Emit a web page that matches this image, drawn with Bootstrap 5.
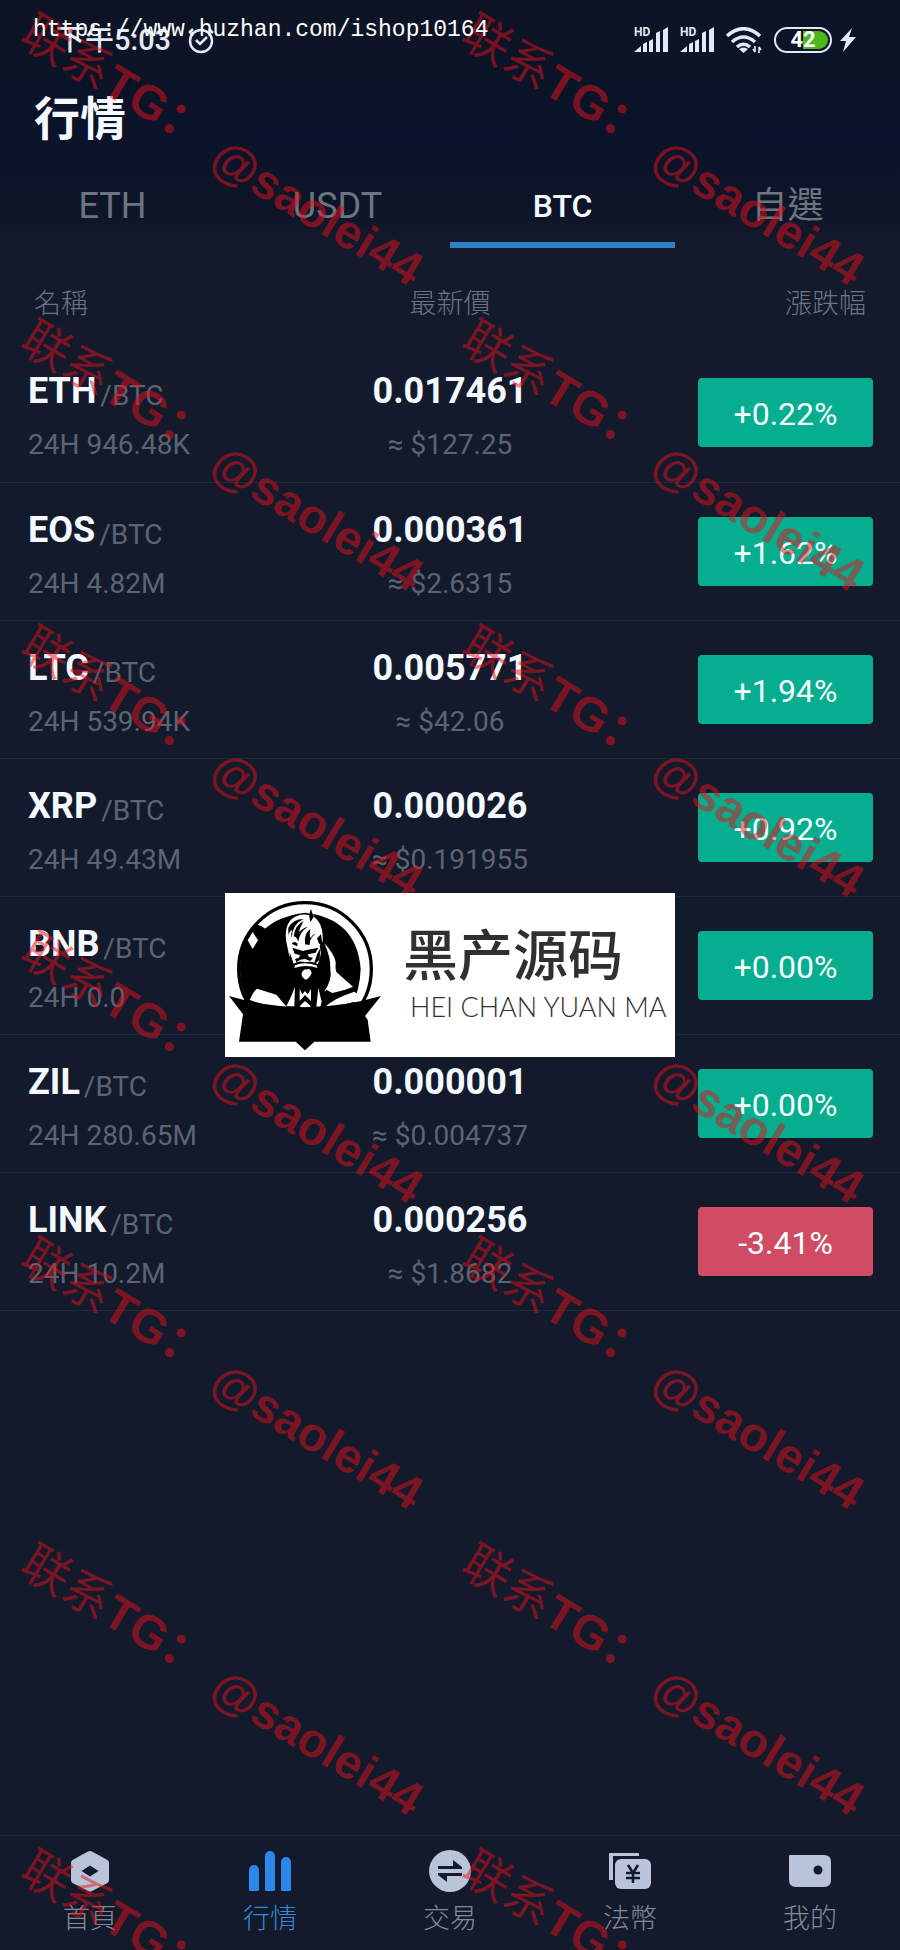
<!DOCTYPE html>
<html lang="zh-Hant">
<head>
<meta charset="utf-8">
<meta name="viewport" content="width=device-width, initial-scale=1">
<title>行情</title>
<link href="https://cdn.jsdelivr.net/npm/bootstrap@5.3.0/dist/css/bootstrap.min.css" rel="stylesheet">
<style>
  body { background: #121a2c; color: #f4f8ff; font-family: Roboto, "Noto Sans CJK TC", sans-serif; }
  .top-area { background: linear-gradient(#0c1424, #0b132a 55%, #0e1528 85%, #121a2c); }
  .status-bar { height: 88px; padding: 0 44px 8px 56px; color: #e3e9f8; }
  .status-icons { gap: 12px; }
  .clock-text { font-size: 29px; line-height: 36px; font-weight: 500; }
  .battery { width: 58px; height: 26px; border: 2px solid #e3e9f8; border-radius: 13px; padding: 2px;
    background: linear-gradient(90deg, transparent 50%, #4ab81c 50%); background-clip: content-box; color: #fff;
    font-size: 22px; line-height: 18px; font-weight: 700; text-align: center; }
  .page-title { font-size: 46px; line-height: 62px; font-weight: 700; padding-left: 34px; }
  .market-tabs a { height: 98px; padding-top: 20px; color: #6e7480; font-size: 36px; border-bottom: 6px solid transparent; text-decoration: none; }
  .market-tabs a.active { color: #f4f8ff; font-size: 32px; font-weight: 500; border-bottom-color: #3080c8; }
  .quotes { table-layout: fixed; --bs-table-bg: transparent; --bs-table-color: inherit; color: inherit; }
  .quotes th { height: 96px; padding: 17px 34px 0; font-size: 27px; font-weight: 300; color: #6c7482; border: 0; vertical-align: middle; }
  .quotes td { height: 138px; padding: 20px 27px 0; border-bottom: 1px solid #20293a; vertical-align: top; }
  .quotes td:nth-child(2) { padding: 20px 0 0; }
  .pair { height: 54px; padding-bottom: 6px; font-size: 36px; line-height: 42px; font-weight: 700; }
  .pair, .quotes td:first-child .sub-line { margin-left: 1px; }
  .pair .quote-unit { font-size: 28px; line-height: 32px; font-weight: 400; color: #5c6474; margin-left: 4px; }
  .price { font-size: 36px; line-height: 54px; font-weight: 700; }
  .sub-line { font-size: 28px; line-height: 54px; color: #5c6474; }
  .change { width: 175px; height: 69px; margin-top: 14px; padding: 3px 0 0; border: 0; border-radius: 4px; background: #06ad8f; color: #f4fffd; font-size: 32px; line-height: 66px; }
  .change.down { background: #d14b65; }
  .tab-bar { border-top: 1px solid #1a2335; height: 115px; padding-top: 14px; }
  .tab-bar a { color: #848b96; font-size: 27px; font-weight: 300; line-height: 36px; text-decoration: none; gap: 9px; }
  .tab-bar a.active { color: #3a88d4; }
  .tab-bar svg { color: #b9c4d8; }
  .tab-bar a.active svg { color: #2b87ea; }
  .marks { position: absolute; inset: 0; overflow: hidden; pointer-events: none; display: grid;
    grid-template-columns: 49% 49%; grid-auto-rows: 306px; }
  .stamp { display: flex; align-items: flex-start; gap: 16px; height: 68px; padding-left: 48px; margin-top: -22px;
    white-space: nowrap; transform-origin: 0 0; transform: rotate(31deg);
    font: 700 48px/60px "Liberation Sans", "Noto Sans CJK SC", sans-serif; color: rgba(230, 15, 25, .5); }
  .stamp i { font-style: normal; font-weight: 400; }
  .stamp b { align-self: flex-end; }
  .site-url { position: absolute; left: 33px; top: 15px; font: 23px/30px "Liberation Mono", monospace; color: #fff; text-decoration: none; }
  .brand-plate { position: absolute; left: 50%; top: 50%; width: 50%; height: 164px; transform: translate(-50%, -50%); background: #fff; }
  .brand-text { padding-left: 18px; color: #303030; font-family: "Noto Sans CJK SC", sans-serif; }
  .brand-name { font-size: 55px; line-height: 52px; font-weight: 500; margin-bottom: 12px; }
  .brand-latin { font: 300 27px/36px Lato, sans-serif; padding-left: 7px; white-space: nowrap; }
</style>
</head>
<body>
<div class="position-relative min-vh-100 d-flex flex-column overflow-hidden">
  <header class="top-area">
    <div class="status-bar d-flex align-items-center justify-content-between">
      <div class="d-flex align-items-center gap-3">
        <span class="clock-text">下午5:03</span>
        <svg width="28" height="28" viewBox="0 0 28 28" fill="none" stroke="currentColor" stroke-width="2.5"><circle cx="14" cy="15" r="11"/><path d="M9 14l4 4 7-7M2 7l4-4M22 3l4 4"/></svg>
      </div>
      <div class="status-icons d-flex align-items-center">
        <svg width="34" height="26" viewBox="0 0 34 26" fill="currentColor" overflow="visible"><text x="0" y="9" font-size="12" font-weight="700">HD</text><path d="M0 25l7-6v6zM9 17l4-2v10H9zM15 14l4-2v13h-4zM22 6l4-2v21h-4zM29 3l5-3v25h-5z"/></svg>
        <svg width="34" height="26" viewBox="0 0 34 26" fill="currentColor" overflow="visible"><text x="0" y="9" font-size="12" font-weight="700">HD</text><path d="M0 25l7-6v6zM9 17l4-2v10H9zM15 14l4-2v13h-4zM22 6l4-2v21h-4zM29 3l5-3v25h-5z"/></svg>
        <svg width="36" height="26" viewBox="0 0 36 26" fill="none" stroke="currentColor" stroke-width="3.6"><path d="M1 9q16.500-14.500 33 0M6 15q11.500-10 23 0M11 20q6.500-5.500 13 0"/><path d="M13 22q4.500-3 9 0l-4.500 4z" fill="currentColor" stroke="none"/><path d="M29 19v6M27 22l2 3M33 27v-7M33 20l2 3" stroke-width="1.6"/></svg>
        <div class="d-flex align-items-center gap-2">
          <div class="battery">42</div>
          <svg width="16" height="24" viewBox="0 0 16 24" fill="currentColor"><path d="M12 0L0 13h6L3 24 16 9H9z"/></svg>
        </div>
      </div>
    </div>
    <h1 class="page-title m-0">行情</h1>
    <nav class="market-tabs row g-0">
      <a class="col d-flex align-items-center justify-content-center" href="#eth">ETH</a>
      <a class="col d-flex align-items-center justify-content-center" href="#usdt">USDT</a>
      <a class="col d-flex align-items-center justify-content-center active" href="#btc" aria-current="page">BTC</a>
      <a class="col d-flex align-items-center justify-content-center" href="#fav">自選</a>
    </nav>
  </header>

  <main>
    <table class="quotes table mb-0">
      <thead><tr><th>名稱</th><th class="text-center">最新價</th><th class="text-end">漲跌幅</th></tr></thead>
      <tbody>
        <tr><td><div class="pair d-flex align-items-end">ETH<span class="quote-unit">/BTC</span></div><div class="sub-line">24H 946.48K</div></td><td class="text-center"><div class="price">0.017461</div><div class="sub-line">≈ $127.25</div></td><td class="text-end"><button type="button" class="change">+0.22%</button></td></tr>
        <tr><td><div class="pair d-flex align-items-end">EOS<span class="quote-unit">/BTC</span></div><div class="sub-line">24H 4.82M</div></td><td class="text-center"><div class="price">0.000361</div><div class="sub-line">≈ $2.6315</div></td><td class="text-end"><button type="button" class="change">+1.62%</button></td></tr>
        <tr><td><div class="pair d-flex align-items-end">LTC<span class="quote-unit">/BTC</span></div><div class="sub-line">24H 539.94K</div></td><td class="text-center"><div class="price">0.005771</div><div class="sub-line">≈ $42.06</div></td><td class="text-end"><button type="button" class="change">+1.94%</button></td></tr>
        <tr><td><div class="pair d-flex align-items-end">XRP<span class="quote-unit">/BTC</span></div><div class="sub-line">24H 49.43M</div></td><td class="text-center"><div class="price">0.000026</div><div class="sub-line">≈ $0.191955</div></td><td class="text-end"><button type="button" class="change">+0.92%</button></td></tr>
        <tr><td><div class="pair d-flex align-items-end">BNB<span class="quote-unit">/BTC</span></div><div class="sub-line">24H 0.0</div></td><td></td><td class="text-end"><button type="button" class="change">+0.00%</button></td></tr>
        <tr><td><div class="pair d-flex align-items-end">ZIL<span class="quote-unit">/BTC</span></div><div class="sub-line">24H 280.65M</div></td><td class="text-center"><div class="price">0.000001</div><div class="sub-line">≈ $0.004737</div></td><td class="text-end"><button type="button" class="change">+0.00%</button></td></tr>
        <tr><td><div class="pair d-flex align-items-end">LINK<span class="quote-unit">/BTC</span></div><div class="sub-line">24H 10.2M</div></td><td class="text-center"><div class="price">0.000256</div><div class="sub-line">≈ $1.8682</div></td><td class="text-end"><button type="button" class="change down">-3.41%</button></td></tr>
      </tbody>
    </table>
  </main>

  <nav class="tab-bar row g-0 mt-auto">
    <a class="col d-flex flex-column align-items-center" href="#home"><svg width="42" height="42" viewBox="0 0 42 42" fill="currentColor"><path fill-rule="evenodd" d="M19 1.500q2-1.200 4 0l15.500 8.500q1.500 1 1.500 3v17q0 2-1.500 3L23 41q-2 1.200-4 0L3.500 33Q2 32 2 30V13q0-2 1.500-3zM21 15.500L12.500 21l8.500 5.500 8.500-5.500z"/></svg>首頁</a>
    <a class="col d-flex flex-column align-items-center active" href="#market"><svg width="42" height="42" viewBox="0 0 42 42" fill="currentColor"><path d="M0 40V20a5 5 0 0 1 10 0v20a1 1 0 0 1-1 1H1a1 1 0 0 1-1-1zM16 40V6a5 5 0 0 1 10 0v34a1 1 0 0 1-1 1h-8a1 1 0 0 1-1-1zM32 40V12a5 5 0 0 1 10 0v28a1 1 0 0 1-1 1h-8a1 1 0 0 1-1-1z"/></svg>行情</a>
    <a class="col d-flex flex-column align-items-center" href="#trade"><svg width="42" height="42" viewBox="0 0 42 42"><circle cx="21" cy="21" r="21" fill="currentColor"/><path d="M9 16h15v-6l9 7v2H9zM33 26H18v6l-9-7v-2h24z" fill="#121a2c"/></svg>交易</a>
    <a class="col d-flex flex-column align-items-center" href="#fiat"><svg width="42" height="42" viewBox="0 0 42 42" fill="currentColor"><path d="M0 3h30v3H4v24H0z"/><rect x="6" y="9" width="36" height="30" rx="6"/><path d="M19 15l5 8 5-8M24 22v11M17 23h14M17 28h14" fill="none" stroke="#121a2c" stroke-width="2.600"/></svg>法幣</a>
    <a class="col d-flex flex-column align-items-center" href="#mine"><svg width="42" height="42" viewBox="0 0 42 42"><path d="M1 5h34q7 0 7 7v18q0 7-7 7H7q-7 0-7-7V6q0-1 1-1z" fill="currentColor"/><circle cx="29" cy="20" r="4.500" fill="#121a2c"/></svg>我的</a>
  </nav>

  <div class="marks" lang="zh-CN" aria-hidden="true">
    <div class="stamp"><span><i>联系</i>TG：</span><b>@saolei44</b></div><div class="stamp"><span><i>联系</i>TG：</span><b>@saolei44</b></div>
    <div class="stamp"><span><i>联系</i>TG：</span><b>@saolei44</b></div><div class="stamp"><span><i>联系</i>TG：</span><b>@saolei44</b></div>
    <div class="stamp"><span><i>联系</i>TG：</span><b>@saolei44</b></div><div class="stamp"><span><i>联系</i>TG：</span><b>@saolei44</b></div>
    <div class="stamp"><span><i>联系</i>TG：</span><b>@saolei44</b></div><div class="stamp"><span><i>联系</i>TG：</span><b>@saolei44</b></div>
    <div class="stamp"><span><i>联系</i>TG：</span><b>@saolei44</b></div><div class="stamp"><span><i>联系</i>TG：</span><b>@saolei44</b></div>
    <div class="stamp"><span><i>联系</i>TG：</span><b>@saolei44</b></div><div class="stamp"><span><i>联系</i>TG：</span><b>@saolei44</b></div>
    <div class="stamp"><span><i>联系</i>TG：</span></div><div class="stamp"><span><i>联系</i>TG：</span></div>
  </div>

  <a class="site-url" href="#shop">https://www.huzhan.com/ishop10164</a>

  <div class="brand-plate d-flex align-items-center">
    <svg class="flex-shrink-0" width="160" height="164" viewBox="0 -6 480 492">
      <circle cx="240" cy="222" r="199" fill="#fff" stroke="#000" stroke-width="10"/>
      <path d="M45 222A195 195 0 0 1 95 88L122 100Q160 64 240 53Q395 70 407 222Q405 280 380 340H85Q45 290 45 222z"/>
      <path d="M83 111l16 25-16 26-15-26zM108 82l12-7 10 12-12 14z" fill="#fff"/>
      <path d="M74 315q12-28 22-34l58 18 34 40q-60-4-114-24zM300 336q30-28 88-46l20 14-8 12q-46 18-100 20z" fill="#fff"/>
      <path d="M298 145q30 32 34 56-2 18 2 30l50 44-60 24-26-10q24-34 18-66 2-34-18-78z" fill="#fff"/>
      <!-- head, hair and beard -->
      <path d="M186 150Q174 98 200 72Q222 54 252 60L258 42L267 66Q296 86 293 140L284 150L289 182L276 214L250 222L215 220L204 214L192 180z" fill="#fff"/>
      <path d="M190 98q14-26 46-26-34 14-36 58-4-14 2-26-12 6-12 20zM206 124q4-34 30-46-12 20-14 34 12-14 26-16-24 14-28 44-4-14-14-16zM240 148q-4-32 16-46-4 16 0 28 6-12 16-14-18 12-18 34zM258 42l-6 18 4 22 10-16zM276 130l12-12 4 30-10-2z"/>
      <path d="M202 158l32 10 8-2 38-8-8 15-24 5 4 8 12 2-8 10-16-6-14 2-12 8-4-10 12-4 3-8-16-4zM200 146q8-10 18 0l-2 8zM276 178l10-18-2 34-18 16z"/>
      <path d="M194 172l12 34q18-10 34-4 22-6 40 6l14-60 12 50-14 54-26 24-26 8-28-16-18-24z"/>
      <path d="M210 211q26-12 64 0l4 8q-34-12-70 0zM230 234q8-14 14-10 12-6 16 10-6 16-18 20-14-8-12-20z" fill="#fff"/>
      <!-- collar and tie -->
      <path d="M210 276l-2 58h-24q14-26 26-58zM224 282l8 16 8-10 8 10 10-16v36l-18-18-16 18zM224 334l16-16 18 16-10 4h-16zM280 278l10 42-4 16h-12z" fill="#fff"/>
      <path d="M292 300l12-16 18 10 58-14-4 14-62 20-22 14z"/>
      <path d="M12 303Q240 370 468 303L420 363L428 374L437 440H268L240 466L212 440H42L54 358z"/>
    </svg>
    <div class="brand-text flex-grow-1">
      <div class="brand-name">黑产源码</div>
      <div class="brand-latin">HEI CHAN YUAN MA</div>
    </div>
  </div>
</div>
<script src="https://cdn.jsdelivr.net/npm/bootstrap@5.3.0/dist/js/bootstrap.bundle.min.js"></script>
</body>
</html>
